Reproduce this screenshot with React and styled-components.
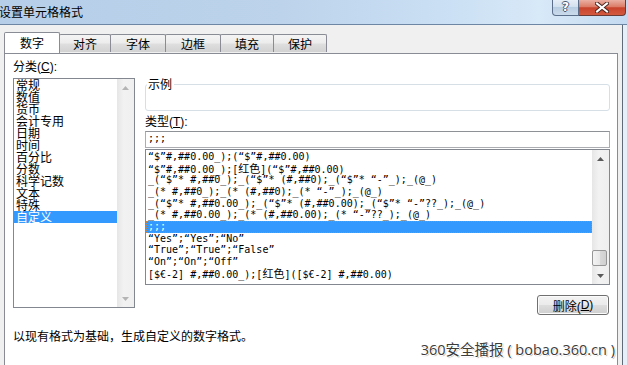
import React from 'react';
import styled, { createGlobalStyle } from 'styled-components';

const GlobalStyle = createGlobalStyle`
  html, body {
    margin: 0;
    padding: 0;
    background: #f0f0f0;
  }
  body {
    font-family: "Liberation Sans", "Noto Sans CJK SC", sans-serif;
    font-size: 12px;
    color: #000;
  }
`;

const Window = styled.div`
  width: 627px;
  height: 365px;
  display: flex;
  flex-direction: column;
  overflow: hidden;
`;

const TitleBar = styled.div`
  height: 24px;
  flex-shrink: 0;
  display: flex;
  align-items: flex-start;
  border-bottom: 1px solid #6d86a3;
  background: linear-gradient(to right, #b6cee8 0%, #bcd3eb 45%, #cbe0f4 72%, #d8e9f8 86%, #c4daf0 100%);
`;

const TitleText = styled.div`
  margin-left: -1px;
  line-height: 24px;
  font-family: "Noto Sans CJK SC", sans-serif;
  font-size: 12px;
  color: #000;
`;

const CaptionButtons = styled.div`
  margin-left: auto;
  margin-right: 1px;
  display: flex;
`;

const HelpButton = styled.div`
  width: 27px;
  height: 16px;
  box-sizing: border-box;
  border: 1px solid #5b6f8b;
  border-top: none;
  border-radius: 0 0 0 4px;
  background: linear-gradient(#e6eef7 0%, #d3e0ee 45%, #b9cde2 50%, #cadbec 100%);
  display: flex;
  align-items: center;
  justify-content: center;
  font-family: "DejaVu Sans", sans-serif;
  font-weight: bold;
  font-size: 12px;
  line-height: 15px;
  color: #fff;
  text-shadow: 1px 0 0 #4a5a70, -1px 0 0 #4a5a70, 0 1px 0 #4a5a70, 0 -1px 0 #4a5a70;
`;

const CloseButton = styled.div`
  width: 47px;
  height: 16px;
  box-sizing: border-box;
  border: 1px solid #6a3a34;
  border-top: none;
  border-left: none;
  border-radius: 0 0 4px 0;
  background: linear-gradient(#eab0a3 0%, #dc7c67 45%, #c8432b 52%, #d35a3f 100%);
  display: flex;
  align-items: center;
  justify-content: center;
`;

const Body = styled.div`
  flex: 1;
  display: flex;
  min-height: 0;
`;

const Client = styled.div`
  width: 622px;
  flex-shrink: 0;
  box-sizing: border-box;
  padding: 7px 0 0 4px;
  background: #f0f0f0;
  display: flex;
  flex-direction: column;
`;

const FrameEdge = styled.div`
  flex: 1;
  border-left: 1px solid #5f6b79;
  background: #e6eff8;
`;

const TabRow = styled.div`
  height: 21px;
  display: flex;
  align-items: flex-end;
`;

const Tab = styled.div`
  width: ${p => p.$width}px;
  height: ${p => (p.$active ? 21 : 18)}px;
  margin-left: ${p => (p.$first ? 0 : -1)}px;
  margin-bottom: ${p => (p.$active ? 0 : 1)}px;
  box-sizing: border-box;
  border: 1px solid #898c95;
  border-bottom: none;
  border-radius: 2px 2px 0 0;
  background: ${p =>
    p.$active ? '#fff' : 'linear-gradient(#f4f4f4 0%, #ececec 48%, #dfdfdf 52%, #d2d2d2 100%)'};
  position: relative;
  z-index: ${p => (p.$active ? 2 : 0)};
  display: flex;
  align-items: center;
  justify-content: center;
  padding-top: ${p => (p.$active ? 0 : 1)}px;
  font-family: "Noto Sans CJK SC", sans-serif;
  font-size: 12px;
  line-height: 14px;
`;

const Panel = styled.div`
  width: 614px;
  flex: 1;
  box-sizing: border-box;
  position: relative;
  z-index: 1;
  background: #fff;
  border: 1px solid #898c95;
  border-bottom: none;
  padding: 7px 7px 0 8px;
  display: flex;
  flex-direction: column;
`;

const Main = styled.div`
  display: grid;
  grid-template-columns: 122px 465px;
  column-gap: 10px;
  align-items: start;
`;

const Column = styled.div`
  display: flex;
  flex-direction: column;
`;

const FieldLabel = styled.div`
  height: 13px;
  line-height: 13px;
  font-size: 12px;
  white-space: nowrap;
  margin-top: ${p => p.$top || 0}px;

  u {
    text-decoration: underline;
  }
`;

const ListBox = styled.div`
  height: ${p => p.$height}px;
  margin-top: ${p => p.$top}px;
  box-sizing: border-box;
  border: 1px solid #828790;
  background: #fff;
  display: flex;
  overflow: hidden;
`;

const Items = styled.div`
  flex: 1;
  min-width: 0;
  padding-top: ${p => p.$pad || 0}px;
`;

const CategoryItem = styled.div`
  height: 12px;
  line-height: 12px;
  padding-left: 2px;
  font-family: "Noto Sans CJK SC", sans-serif;
  font-size: 12px;
  white-space: nowrap;
  background: ${p => (p.$selected ? '#3399ff' : 'transparent')};
  color: ${p => (p.$selected ? '#fff' : '#000')};
`;

const TypeRow = styled.div`
  height: 11.66px;
  box-sizing: border-box;
  padding-left: ${p => (p.$selected ? 1 : 2)}px;
  font-family: "DejaVu Sans Mono", monospace;
  font-size: 10px;
  white-space: pre;
  background: ${p => (p.$selected ? '#3399ff' : 'transparent')};
  color: ${p => (p.$selected ? '#fff' : '#000')};
  border: ${p => (p.$selected ? '1px dotted #d0853a' : 'none')};
  line-height: ${p => (p.$selected ? '9.66px' : '11.66px')};
`;

const Cjk = styled.span`
  font-family: "Noto Sans CJK SC", sans-serif;
  font-size: 11px;
  line-height: 10px;
`;

const ScrollBar = styled.div`
  width: 17px;
  flex-shrink: 0;
  background: linear-gradient(to right, #e6e6e6, #f2f2f2 40%, #efefef);
  display: flex;
  flex-direction: column;
`;

const ScrollArrow = styled.div`
  height: 17px;
  flex-shrink: 0;
  display: flex;
  align-items: center;
  justify-content: center;
`;

const Track = styled.div`
  flex: 1;
  display: flex;
  flex-direction: column;
  justify-content: flex-end;
`;

const Thumb = styled.div`
  width: 15px;
  height: 16px;
  margin: 0 0 1px 0;
  box-sizing: border-box;
  border: 1px solid #969696;
  border-radius: 2px;
  background: linear-gradient(to right, #f3f3f3, #e8e8e8 50%, #d9d9d9 52%, #d0d0d0);
`;

const GroupBox = styled.fieldset`
  margin: 16px 0 0 0;
  padding: 0 0 0 1px;
  border: 1px solid #d5dfe5;
  border-radius: 3px;
  min-width: 0;
`;

const Legend = styled.legend`
  padding: 0 2px 0 1px;
  font-family: "Noto Sans CJK SC", sans-serif;
  font-size: 12px;
  line-height: 14px;
`;

const GroupContent = styled.div`
  height: 19px;
`;

const TypeInput = styled.div`
  height: 17px;
  margin-top: 2px;
  box-sizing: border-box;
  border: 1px solid #abadb3;
  border-top-color: #8e9196;
  padding-left: 2px;
  font-family: "DejaVu Sans Mono", monospace;
  font-size: 10px;
  line-height: 14px;
`;

const Button = styled.div`
  align-self: flex-end;
  width: 72px;
  height: 20px;
  margin-top: 10px;
  margin-right: 1px;
  box-sizing: border-box;
  border: 1px solid #707070;
  border-radius: 3px;
  background: linear-gradient(#f3f3f3 0%, #ebebeb 48%, #dddddd 52%, #cfcfcf 100%);
  box-shadow: inset 0 0 0 1px #fbfbfb;
  display: flex;
  align-items: center;
  justify-content: center;
  font-size: 12px;

  u {
    text-decoration: underline;
  }
`;

const Hint = styled.div`
  margin-top: 14px;
  height: 13px;
  line-height: 13px;
  font-family: "Noto Sans CJK SC", sans-serif;
  font-size: 12px;
`;

const Watermark = styled.div`
  margin: -1px -5px 0 0;
  text-align: right;
  line-height: 18px;
  font-family: "Open Sans", "Noto Sans CJK SC", sans-serif;
  font-size: 14.5px;
  color: #3c3c3c;
  text-shadow: 1px 0 0 #fff, -1px 0 0 #fff, 0 1px 0 #fff, 0 -1px 0 #fff, 1px 1px 1px #9a9a9a;
`;

const Triangle = ({ up, color }) => (
  <svg width="7" height="4" viewBox="0 0 7 4">
    <path d={up ? 'M0 4 L3.5 0 L7 4 Z' : 'M0 0 L3.5 4 L7 0 Z'} fill={color} />
  </svg>
);

const CloseGlyph = () => (
  <svg width="14" height="11" viewBox="0 0 14 11">
    <path d="M2 1.5 L12 9.5 M12 1.5 L2 9.5" stroke="#4b2620" strokeWidth="4" strokeLinecap="square" />
    <path d="M2 1.5 L12 9.5 M12 1.5 L2 9.5" stroke="#fff" strokeWidth="2" strokeLinecap="square" />
  </svg>
);

const tabs = [
  { label: '数字', width: 56 },
  { label: '对齐', width: 52 },
  { label: '字体', width: 56 },
  { label: '边框', width: 56 },
  { label: '填充', width: 54 },
  { label: '保护', width: 54 },
];

const categories = ['常规', '数值', '货币', '会计专用', '日期', '时间', '百分比', '分数', '科学记数', '文本', '特殊', '自定义'];

const formats = [
  '“$”#,##0.00_);(“$”#,##0.00)',
  '“$”#,##0.00_);[红色](“$”#,##0.00)',
  '_(“$”* #,##0_);_(“$”* (#,##0);_(“$”* “-”_);_(@_)',
  '_(* #,##0_);_(* (#,##0);_(* “-”_);_(@_)',
  '_(“$”* #,##0.00_);_(“$”* (#,##0.00);_(“$”* “-”??_);_(@_)',
  '_(* #,##0.00_);_(* (#,##0.00);_(* “-”??_);_(@_)',
  ';;;',
  '“Yes”;“Yes”;“No”',
  '“True”;“True”;“False”',
  '“On”;“On”;“Off”',
  '[$€-2] #,##0.00_);[红色]([$€-2] #,##0.00)',
];

// wrap chinese runs so they get the CJK face at a readable size
const renderFormat = (text) =>
  text.split(/([\u4e00-\u9fff]+)/).map((part, i) =>
    /[\u4e00-\u9fff]/.test(part) ? <Cjk key={i}>{part}</Cjk> : part
  );

const App = () => {
  return (
    <>
      <GlobalStyle />
      <Window>
        <TitleBar>
          <TitleText>设置单元格格式</TitleText>
          <CaptionButtons>
            <HelpButton>?</HelpButton>
            <CloseButton>
              <CloseGlyph />
            </CloseButton>
          </CaptionButtons>
        </TitleBar>

        <Body>
          <Client>
            <TabRow>
              {tabs.map((tab, index) => (
                <Tab key={tab.label} $width={tab.width} $first={index === 0} $active={index === 0}>
                  {tab.label}
                </Tab>
              ))}
            </TabRow>

            <Panel>
              <Main>
                <Column>
                  <FieldLabel>分类(<u>C</u>):</FieldLabel>
                  <ListBox $height={230} $top={4}>
                    <Items>
                      {categories.map(name => (
                        <CategoryItem key={name} $selected={name === '自定义'}>
                          {name}
                        </CategoryItem>
                      ))}
                    </Items>
                    <ScrollBar>
                      <ScrollArrow>
                        <Triangle up color="#b4b4b4" />
                      </ScrollArrow>
                      <Track />
                      <ScrollArrow>
                        <Triangle color="#b4b4b4" />
                      </ScrollArrow>
                    </ScrollBar>
                  </ListBox>
                </Column>

                <Column>
                  <GroupBox>
                    <Legend>示例</Legend>
                    <GroupContent />
                  </GroupBox>
                  <FieldLabel $top={5}>类型(<u>T</u>):</FieldLabel>
                  <TypeInput>;;;</TypeInput>
                  <ListBox $height={136} $top={1}>
                    <Items $pad={1}>
                      {formats.map((fmt, index) => (
                        <TypeRow key={index} $selected={fmt === ';;;'}>
                          {renderFormat(fmt)}
                        </TypeRow>
                      ))}
                    </Items>
                    <ScrollBar>
                      <ScrollArrow>
                        <Triangle up color="#5a5a5a" />
                      </ScrollArrow>
                      <Track>
                        <Thumb />
                      </Track>
                      <ScrollArrow>
                        <Triangle color="#5a5a5a" />
                      </ScrollArrow>
                    </ScrollBar>
                  </ListBox>
                  <Button>删除(<u>D</u>)</Button>
                </Column>
              </Main>

              <Hint>以现有格式为基础，生成自定义的数字格式。</Hint>
              <Watermark>360安全播报 ( bobao.360.cn )</Watermark>
            </Panel>
          </Client>
          <FrameEdge />
        </Body>
      </Window>
    </>
  );
};

export default App;
